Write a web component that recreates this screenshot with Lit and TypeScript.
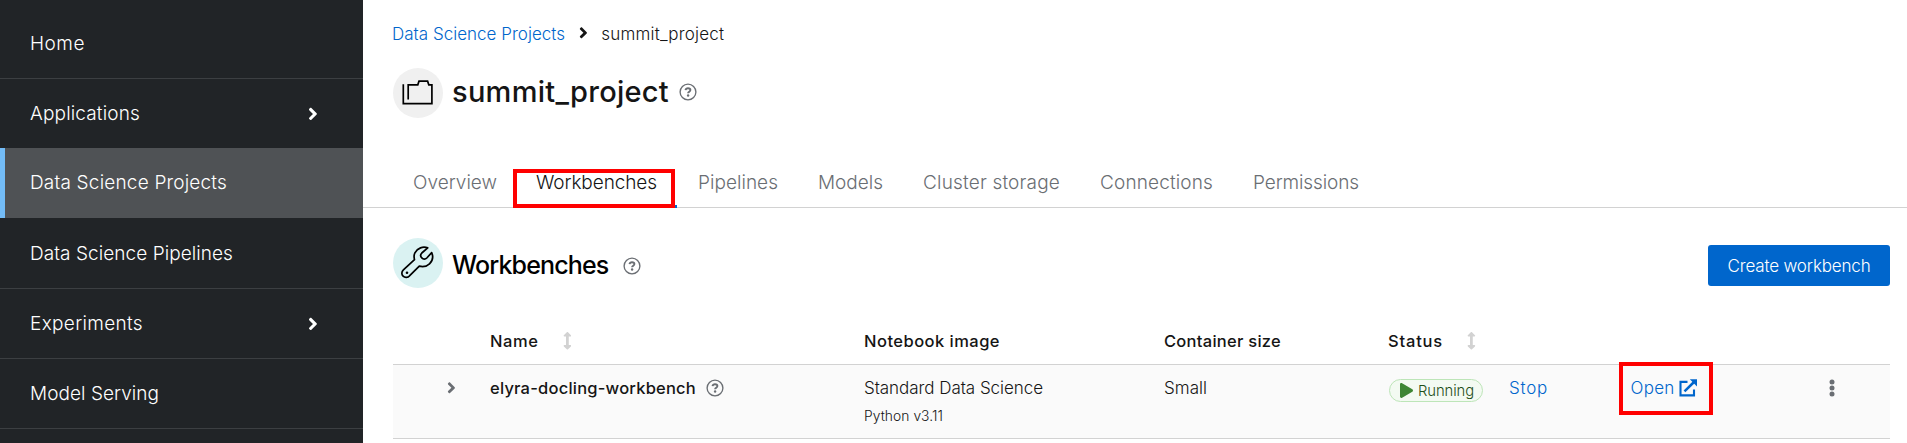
import { LitElement, html, css, svg } from "lit";
import { customElement, property, state } from "lit/decorators.js";
import { classMap } from "lit/directives/class-map.js";

/** Single line of text whose tracking is adjusted to fill a given width. */
@customElement("fit-text")
class FitText extends LitElement {
  @property({ type: Number }) width = 0;
  @property() text = "";
  @state() private tracking = 0;

  static styles = css`
    :host { display: inline-block; white-space: pre; flex: none; }
    .box { display: block; }
    .run { display: inline-block; }
  `;

  firstUpdated() {
    const run = this.renderRoot.querySelector(".run") as HTMLElement;
    const natural = run.getBoundingClientRect().width;
    if (this.width && this.text.length) {
      this.tracking = (this.width - natural) / this.text.length;
    }
  }

  render() {
    return html`<span class="box" style="width:${this.width}px;letter-spacing:${this.tracking}px"><span class="run">${this.text}</span></span>`;
  }
}

const angle = (cls: string) => html`<svg class=${cls} viewBox="0 0 256 512"><path fill="currentColor" d="M224.3 273l-136 136c-9.4 9.4-24.6 9.4-33.9 0l-22.6-22.6c-9.4-9.4-9.4-24.6 0-33.9l96.4-96.4-96.4-96.4c-9.4-9.4-9.4-24.6 0-33.9L54.3 103c9.4-9.4 24.6-9.4 33.9 0l136 136c9.5 9.4 9.5 24.6.1 34z"/></svg>`;

const help = html`<svg class="help" viewBox="0 0 18 18" fill="none" stroke="currentColor">
  <circle cx="9" cy="9" r="7.9" stroke-width="1.35"/>
  <path d="M6.5 7.1C6.8 5.8 7.8 5.2 9 5.2c1.400 0 2.400.7 2.400 1.900 0 1.700-2.300 1.600-2.300 3.200" stroke-width="1.9"/>
  <circle cx="9.1" cy="12.500" r="1.200" fill="currentColor" stroke="none"/>
</svg>`;

const sort = html`<svg class="sort" viewBox="0 0 256 512"><path fill="currentColor" d="M214.059 377.941H168V134.059h46.059c21.382 0 32.09-25.851 16.971-40.971L144.971 7.029c-9.373-9.373-24.568-9.373-33.941 0L24.971 93.088c-15.119 15.119-4.411 40.971 16.971 40.971H88v243.882H41.941c-21.382 0-32.09 25.851-16.971 40.971l86.059 86.059c9.373 9.373 24.568 9.373 33.941 0l86.059-86.059c15.12-15.119 4.412-40.971-16.97-40.971z"/></svg>`;

const folderPath = svg`<path d="M10.300 16.200V35.700H38.900V16.800H35.800L34.600 13.200H26L24.800 16.800H15.200V31.500" fill="none" stroke="#000" stroke-width="1.700"/>`;
const wrenchPath = svg`<g fill="none" stroke="#000" stroke-width="1.700" stroke-linejoin="round">
  <path d="M34.700 9.900C30 8 24.500 10 21.900 14.800c-1.100 2.200-1 4.500-.4 6.800L10.400 31.800c-2 1.900-2 4.700-.3 6.400 1.800 1.800 4.800 1.600 6.600-.5L26.300 28.200c3.500.8 7.500.2 10.200-2.400 3-2.900 3.900-7.200 2.200-11.200L33.800 20c-1.400 1.400-3.600 1.400-5-.1-1.400-1.500-1.400-3.500 0-4.900z"/>
  </g><circle cx="14" cy="34.800" r="1.300"/>`;

@customElement("app-root")
class AppRoot extends LitElement {
  @property({ attribute: false }) nav = [
    { t: "Home", w: 55 },
    { t: "Applications", w: 110, more: true },
    { t: "Data Science Projects", w: 197, active: true },
    { t: "Data Science Pipelines", w: 203 },
    { t: "Experiments", w: 113, more: true },
    { t: "Model Serving", w: 129 },
    { t: "", w: 0 },
  ] as { t: string; w: number; more?: boolean; active?: boolean }[];

  @property({ attribute: false }) tabs = [
    ["Overview", 84], ["Workbenches", 121], ["Pipelines", 80], ["Models", 65],
    ["Cluster storage", 137], ["Connections", 113], ["Permissions", 106],
  ] as [string, number][];

  static styles = css`
    :host {
      display: flex; width: 100%; height: 443px; overflow: hidden; background: #fff; color: #151515;
      font-family: Inter, "Open Sans", sans-serif; font-size: 17px; line-height: 26px;
    }
    * { box-sizing: border-box; }
    svg { display: block; flex: none; }
    .side { width: 363px; flex: none; background: #212427; color: #fff; padding-top: 9px; font-size: 19px; font-weight: 300; }
    .item { height: 70px; display: flex; align-items: center; padding: 0 45px 0 30px; border-bottom: 1px solid #3c3f42; }
    .item.active { background: #4f5255; border-left: 5px solid #73bcf7; border-bottom: 0; padding-left: 25px; margin: -1px 0 1px; }
    .item .angle { margin-left: auto; }
    .angle { width: 9.900px; height: 19.800px; }
    .main { flex: 1; min-width: 0; display: flex; flex-direction: column; }
    .crumbs { display: flex; align-items: center; padding-left: 29px; margin-top: 21px; height: 26px; font-weight: 350; }
    .crumbs fit-text:first-child { color: #06c; }
    .sm { width: 8.800px; height: 17.600px; }
    .crumbs .sm { margin: 0 14px 2px 13.500px; }
    .title { display: flex; align-items: center; height: 50px; margin: 21px 0 0 30px; }
    .disc { width: 50px; height: 50px; border-radius: 50%; background: #f0f0f0; }
    .disc.teal { background: #daf2f2; }
    .h1 { font-size: 29px; line-height: 40px; font-weight: 450; margin: 0 10px 0 9px; padding-bottom: 2px; }
    .help { width: 18px; height: 18px; color: #6a6e73; }
    .title .help { margin-bottom: 3px; }
    .tabs { display: flex; height: 50px; margin-top: 40px; padding-left: 29px; border-bottom: 1px solid #d2d2d2; position: relative; }
    .tab { padding: 12px 19px 0 21px; height: 50px; font-size: 19px; font-weight: 300; color: #6a6e73; }
    .tab.on { color: #151515; border-bottom: 3px solid #06c; padding: 12px 20px 0; }
    .mark { position: absolute; border: 4px solid #f00; }
    .tabs .mark { left: 150px; top: 11px; width: 162px; height: 39px; }
    .section { display: flex; align-items: center; height: 50px; margin: 30px 17px 0 30px; }
    .h2 { font-size: 25px; line-height: 36px; font-weight: 450; color: #000; margin: 4px 14px 0 9px; }
    .section .help { margin-top: 5px; }
    .btn { margin-left: auto; margin-top: 5px; width: 182px; height: 41px; border-radius: 3px; background: #06c; color: #fff; display: flex; align-items: center; justify-content: center; font-weight: 300; }
    .table { margin: 29px 17px 0 30px; }
    .row { display: grid; grid-template-columns: 97px 374px 300px 224px 121px 120px 1fr; }
    .head { height: 48px; padding-top: 11px; border-bottom: 1px solid #d2d2d2; font-weight: 550; font-size: 16.500px; }
    .cell { display: flex; align-items: center; height: 26px; }
    .sort { width: 8.800px; height: 17.600px; color: #d2d2d2; margin-left: 24px; }
    .body { height: 74px; padding-top: 10px; background: #fafafa; border-bottom: 1px solid #d2d2d2; font-weight: 350; }
    .expand { padding-left: 54px; color: #6a6e73; }
    .name { font-weight: 550; font-size: 16.500px; }
    .name .help { margin-left: 10px; }
    .sub { font-size: 13.800px; line-height: 22px; display: block; margin-top: 4px; }
    .pill { width: 94px; height: 23px; margin: 4px 0 0 1px; border: 1px solid #bde5b8; border-radius: 12px; background: #f3faf2; color: #1e4f18; display: flex; align-items: center; padding-left: 10px; font-size: 14.800px; line-height: 20px; }
    .play { width: 13px; height: 15px; color: #3e8635; margin: -1px 5px 0 0; }
    .link { color: #06c; }
    .open { position: relative; padding-left: 1.500px; }
    .open .ext { width: 18px; height: 18px; margin-left: 4px; }
    .open .mark { left: -10px; top: -13px; width: 94px; height: 53px; }
    .kebab { margin-left: 132px; width: 6px; height: 18px; color: #6a6e73; }
  `;

  render() {
    return html`
      <nav class="side">
        ${this.nav.map(n => html`<div class=${classMap({ item: true, active: !!n.active })}>
          <fit-text .text=${n.t} .width=${n.w}></fit-text>${n.more ? angle("angle") : null}
        </div>`)}
      </nav>
      <main class="main">
        <div class="crumbs">
          <fit-text .text=${"Data Science Projects"} .width=${173}></fit-text>
          ${angle("sm")}
          <fit-text .text=${"summit_project"} .width=${123}></fit-text>
        </div>
        <div class="title">
          <svg class="disc" viewBox="0 0 50 50">${folderPath}</svg>
          <fit-text class="h1" .text=${"summit_project"} .width=${217}></fit-text>
          ${help}
        </div>
        <div class="tabs">
          ${this.tabs.map(([t, w]) => html`<div class=${classMap({ tab: true, on: t === "Workbenches" })}><fit-text .text=${t} .width=${w}></fit-text></div>`)}
          <div class="mark"></div>
        </div>
        <div class="section">
          <svg class="disc teal" viewBox="0 0 50 50">${wrenchPath}</svg>
          <fit-text class="h2" .text=${"Workbenches"} .width=${156.500}></fit-text>
          ${help}
          <div class="btn"><fit-text .text=${"Create workbench"} .width=${143}></fit-text></div>
        </div>
        <div class="table">
          <div class="row head">
            <div></div>
            <div class="cell"><fit-text .text=${"Name"} .width=${48.500}></fit-text>${sort}</div>
            <div class="cell"><fit-text .text=${"Notebook image"} .width=${136}></fit-text></div>
            <div class="cell"><fit-text .text=${"Container size"} .width=${117}></fit-text></div>
            <div class="cell"><fit-text .text=${"Status"} .width=${55}></fit-text>${sort}</div>
          </div>
          <div class="row body">
            <div class="cell expand">${angle("sm")}</div>
            <div class="cell name"><fit-text .text=${"elyra-docling-workbench"} .width=${206}></fit-text>${help}</div>
            <div><div class="cell"><fit-text .text=${"Standard Data Science"} .width=${179}></fit-text></div>
              <fit-text class="sub" .text=${"Python v3.11"} .width=${79}></fit-text></div>
            <div class="cell"><fit-text .text=${"Small"} .width=${43}></fit-text></div>
            <div><div class="pill">
              <svg class="play" viewBox="0 0 448 512" preserveAspectRatio="none"><path fill="currentColor" d="M424.4 214.7L72.4 6.6C43.8-10.3 0 6.1 0 47.900V464c0 37.500 40.700 60.100 72.400 41.300l352-208c31.400-18.500 31.500-64.100 0-82.600z"/></svg>
              <fit-text .text=${"Running"} .width=${56}></fit-text></div></div>
            <div class="cell link"><fit-text .text=${"Stop"} .width=${39}></fit-text></div>
            <div class="cell link open"><fit-text .text=${"Open"} .width=${44}></fit-text>
              <svg class="ext" viewBox="0 0 18 18"><path d="M8.500 2.900H1.500V16.400H15V10.500" fill="none" stroke="currentColor" stroke-width="2.100"/><path d="M5.500 12.300L15 3" stroke="currentColor" stroke-width="2.500"/><path d="M10.800.3H18V7.500z" fill="currentColor"/></svg>
              <svg class="kebab" viewBox="0 0 6 18" fill="currentColor"><circle cx="3" cy="3" r="2.500"/><circle cx="3" cy="9" r="2.500"/><circle cx="3" cy="15" r="2.500"/></svg>
              <div class="mark"></div></div>
          </div>
        </div>
      </main>`;
  }
}
